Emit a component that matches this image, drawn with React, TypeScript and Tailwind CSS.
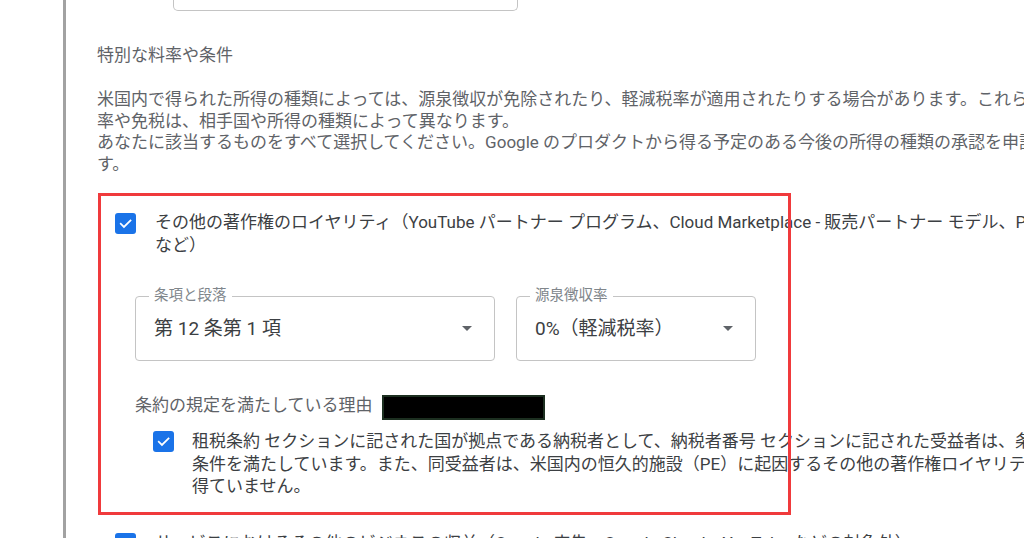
import React from 'react'

/**
 * Checked checkbox in Google blue
 */
function CheckBox() {
  return (
    <div className="flex h-[21px] w-[21px] shrink-0 items-center justify-center rounded-[3px] bg-[#1a73e8]">
      <svg width="15" height="15" viewBox="0 0 24 24" fill="none">
        <path d="M4.5 12.5l5 5L20 7" stroke="white" strokeWidth="2.8" strokeLinecap="square" />
      </svg>
    </div>
  )
}

/**
 * Outlined select with floating label
 */
interface SelectBoxProps {
  label: string
  value: string
  width: string
}

function SelectBox({ label, value, width }: SelectBoxProps) {
  return (
    <div
      className={`relative flex h-[65px] items-center justify-between rounded-[4px] border border-[#c4c4c4] pl-[18px] pr-[22px] ${width}`}
    >
      <span className="absolute -top-[10px] left-[13px] bg-white px-[5px] text-[14.5px] leading-[18px] text-[#80868b]">
        {label}
      </span>
      <span className="text-[19px] leading-[24px] text-[#3c4043]">{value}</span>
      <svg width="10" height="5" viewBox="0 0 10 5">
        <path d="M0 0h10L5 5z" fill="#5f6368" />
      </svg>
    </div>
  )
}

export default function App() {
  return (
    <div className="relative h-[538px] w-[1024px] overflow-hidden bg-white font-[Roboto,'Noto_Sans_CJK_JP',sans-serif] text-[17px]">
      <div className="ml-[63px] h-full border-l-[3px] border-[#a2a2a2] pl-[31px]">
        {/* Field above, cut off by the top edge */}
        <div className="ml-[76px] h-[11px] w-[345px] rounded-b-[5px] border border-t-0 border-[#c4c4c4]" />

        <div className="mt-[33px] whitespace-nowrap leading-[22px] text-[#5f6368]">特別な料率や条件</div>

        <div className="mt-[23px] whitespace-nowrap leading-[21.5px] text-[#5f6368]">
          <div>
            米国内で得られた所得の種類によっては、源泉徴収が免除されたり、軽減税率が適用されたりする場合があります。これらの税
          </div>
          <div>率や免税は、相手国や所得の種類によって異なります。</div>
          <div>
            あなたに該当するものをすべて選択してください。Google のプロダクトから得る予定のある今後の所得の種類の承認を申請する場合も選択しま
          </div>
          <div>す。</div>
        </div>

        {/* Copyright royalties */}
        <div className="ml-[18px] mt-[36px] flex items-start">
          <div className="mt-[2px]">
            <CheckBox />
          </div>
          <div className="ml-[19px] whitespace-nowrap leading-[23px] text-[#3c4043]">
            <div>
              その他の著作権のロイヤリティ（YouTube パートナー プログラム、Cloud Marketplace - 販売パートナー モデル、Play
            </div>
            <div>など）</div>
          </div>
        </div>

        <div className="ml-[38px] mt-[39px] flex gap-[21px]">
          <SelectBox label="条項と段落" value="第 12 条第 1 項" width="w-[360px]" />
          <SelectBox label="源泉徴収率" value="0%（軽減税率）" width="w-[240px]" />
        </div>

        <div className="ml-[38px] mt-[33px] flex items-start">
          <span className="whitespace-nowrap leading-[22px] text-[#5f6368]">条約の規定を満たしている理由</span>
          <div className="ml-[9px] mt-[1px] h-[25px] w-[163px] border-2 border-[#1c2f20] bg-black" />
        </div>

        <div className="ml-[56px] mt-[10px] flex items-start">
          <div className="mt-[1px]">
            <CheckBox />
          </div>
          <div className="ml-[18px] whitespace-nowrap leading-[22.5px] text-[#3c4043]">
            <div>
              租税条約 セクションに記された国が拠点である納税者として、納税者番号 セクションに記された受益者は、条約の
            </div>
            <div>
              条件を満たしています。また、同受益者は、米国内の恒久的施設（PE）に起因するその他の著作権ロイヤリティを
            </div>
            <div>得ていません。</div>
          </div>
        </div>

        {/* Next option, cut off by the bottom edge */}
        <div className="ml-[18px] mt-[34px] flex items-start">
          <div className="mt-[1px]">
            <CheckBox />
          </div>
          <div className="ml-[19px] whitespace-nowrap leading-[23px] text-[#3c4043]">
            サービスにおけるその他のビジネスの収益（Google 広告、Google Cloud、YouTube などの対象外）
          </div>
        </div>
      </div>

      {/* Red annotation frame */}
      <div className="pointer-events-none absolute left-[98px] top-[193px] h-[322px] w-[693px] border-[3px] border-[#f03a3c]" />
    </div>
  )
}
